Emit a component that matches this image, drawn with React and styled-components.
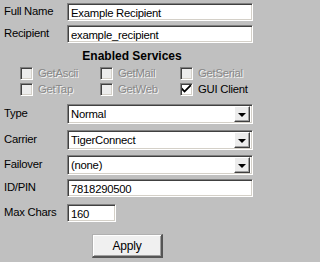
import React from "react";
import styled, { createGlobalStyle } from "styled-components";

const Global = createGlobalStyle`
  html, body { margin: 0; padding: 0; background: #c0c0c0; }
  * { box-sizing: border-box; }
`;

const FONT = `"Liberation Sans", Arial, sans-serif`;

const Panel = styled.div`
  width: 258px;
  height: 262px;
  background: #c0c0c0;
  display: flex;
  flex-direction: column;
  font-family: ${FONT};
  font-size: 11.3px;
  letter-spacing: -0.25px;
  color: #000;
`;

const Row = styled.div`
  display: flex;
  align-items: flex-start;
  height: ${(p) => p.$h}px;
  margin-top: ${(p) => p.$mt}px;
`;

const Label = styled.div`
  width: 67px;
  padding-left: 4px;
  padding-top: ${(p) => p.$pt ?? 1}px;
  line-height: 14px;
  white-space: nowrap;
`;

const TextBox = styled.div`
  width: ${(p) => p.$w || 186}px;
  height: 100%;
  background: #fff;
  border-style: solid;
  border-width: 1px;
  border-color: #808080 #ffffff #ffffff #808080;
  box-shadow: inset 1px 1px 0 #404040, inset -1px -1px 0 #d4d0c8;
  padding: 1px 3px 0;
  display: flex;
  align-items: center;
  white-space: nowrap;
  overflow: hidden;
  line-height: 14px;
`;

const Select = styled(TextBox)`
  justify-content: space-between;
  padding-right: 2px;
  padding-top: 0;
`;

const DropButton = styled.div`
  width: 16px;
  height: 16px;
  background: #ececec;
  border-style: solid;
  border-width: 1px;
  border-color: #ffffff #404040 #404040 #ffffff;
  box-shadow: inset -1px -1px 0 #a0a0a0;
  display: flex;
  align-items: center;
  justify-content: center;
`;

const Arrow = styled.div`
  width: 0;
  height: 0;
  border-left: 4px solid transparent;
  border-right: 4px solid transparent;
  border-top: 4px solid #000;
  margin-top: 1px;
`;

const Heading = styled.div`
  margin-top: 6px;
  height: 14px;
  line-height: 14px;
  text-align: center;
  padding-left: 6px;
  font-weight: bold;
  font-size: 12px;
  letter-spacing: 0;
`;

const CheckGrid = styled.div`
  margin-top: 4px;
  padding-left: 20px;
  display: grid;
  grid-template-columns: 80px 80px 78px;
  row-gap: 3px;
`;

const CheckItem = styled.div`
  display: flex;
  align-items: center;
  height: 13px;
  gap: 5px;
  color: ${(p) => (p.$disabled ? "#888888" : "#000")};
  text-shadow: ${(p) => (p.$disabled ? "1px 1px 0 #f4f4f4" : "none")};
  white-space: nowrap;
  line-height: 13px;
`;

const Box = styled.div`
  width: 13px;
  height: 13px;
  flex: none;
  background: ${(p) => (p.$disabled ? "#ececec" : "#fff")};
  border-style: solid;
  border-width: 1px;
  border-color: #808080 #ffffff #ffffff #808080;
  box-shadow: inset 1px 1px 0 #404040, inset -1px -1px 0 #d4d0c8;
  display: flex;
  align-items: center;
  justify-content: center;
`;

const ApplyButton = styled.div`
  margin-top: 12px;
  margin-left: 92px;
  width: 71px;
  height: 24px;
  background: #f0f0f0;
  border-style: solid;
  border-width: 1px 2px 2px 1px;
  border-color: #b0b0b0 #555555 #555555 #b0b0b0;
  box-shadow: inset 1px 1px 0 #ffffff, inset -1px -1px 0 #a0a0a0;
  display: flex;
  align-items: center;
  justify-content: center;
  line-height: 14px;
  font-size: 12px;
`;

const Check = () => (
  <svg width="9" height="9" viewBox="0 0 7 7">
    <path d="M0 2 L0 4 L2 6 L7 1 L7 -1 L2 4 Z" fill="#000" />
  </svg>
);

const services = [
  { name: "GetAscii", disabled: true },
  { name: "GetMail", disabled: true },
  { name: "GetSerial", disabled: true },
  { name: "GetTap", disabled: true },
  { name: "GetWeb", disabled: true },
  { name: "GUI Client", disabled: false, checked: true },
];

export default function App() {
  return (
    <>
      <Global />
      <Panel>
        <Row $h={18} $mt={3}>
          <Label>Full Name</Label>
          <TextBox>Example Recipient</TextBox>
        </Row>
        <Row $h={18} $mt={4}>
          <Label>Recipient</Label>
          <TextBox>example_recipient</TextBox>
        </Row>
        <Heading>Enabled Services</Heading>
        <CheckGrid>
          {services.map((s) => (
            <CheckItem key={s.name} $disabled={s.disabled}>
              <Box $disabled={s.disabled}>{s.checked && <Check />}</Box>
              {s.name}
            </CheckItem>
          ))}
        </CheckGrid>
        <Row $h={20} $mt={8}>
          <Label $pt={2}>Type</Label>
          <Select>
            Normal
            <DropButton>
              <Arrow />
            </DropButton>
          </Select>
        </Row>
        <Row $h={20} $mt={6}>
          <Label $pt={2}>Carrier</Label>
          <Select>
            TigerConnect
            <DropButton>
              <Arrow />
            </DropButton>
          </Select>
        </Row>
        <Row $h={20} $mt={5}>
          <Label $pt={2}>Failover</Label>
          <Select>
            (none)
            <DropButton>
              <Arrow />
            </DropButton>
          </Select>
        </Row>
        <Row $h={18} $mt={4}>
          <Label>ID/PIN</Label>
          <TextBox>7818290500</TextBox>
        </Row>
        <Row $h={18} $mt={7}>
          <Label>Max Chars</Label>
          <TextBox $w={49}>160</TextBox>
        </Row>
        <ApplyButton>Apply</ApplyButton>
      </Panel>
    </>
  );
}
